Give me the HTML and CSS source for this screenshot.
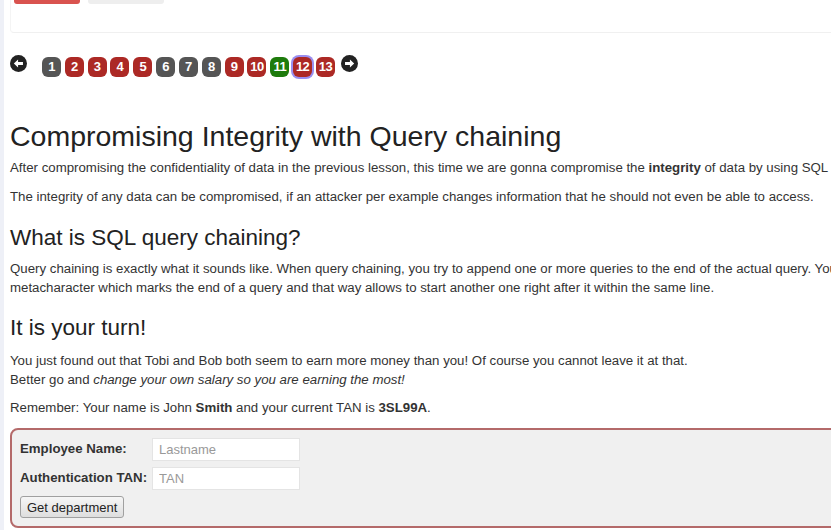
FILE: index.html
```html
<!DOCTYPE html>
<html>
<head>
<meta charset="utf-8">
<link rel="stylesheet" href="styles.css">
</head>
<body>
<div class="page">
  <div class="side"></div>
  <div class="main">
    <div class="toppanel">
      <div class="topbtns">
        <span class="tbtn red"></span>
        <span class="tbtn gray"></span>
      </div>
    </div>
    <div class="pager">
      <svg class="arrow left" width="17" height="17" viewBox="0 0 16 16"><circle cx="8" cy="8" r="8" fill="#222"/><path d="M3.6 8 L7.6 4.2 V6.6 H12.2 V9.4 H7.6 V11.8 Z" fill="#fff"/></svg>
      <div class="pages">
        <span class="pg g">1</span>
        <span class="pg r">2</span>
        <span class="pg r">3</span>
        <span class="pg r">4</span>
        <span class="pg r">5</span>
        <span class="pg g">6</span>
        <span class="pg g">7</span>
        <span class="pg g">8</span>
        <span class="pg r">9</span>
        <span class="pg r">10</span>
        <span class="pg gr">11</span>
        <span class="pg r cur">12</span>
        <span class="pg r">13</span>
        <svg class="arrow right" width="17" height="17" viewBox="0 0 16 16"><circle cx="8" cy="8" r="8" fill="#222"/><path d="M12.4 8 L8.4 4.2 V6.6 H3.8 V9.4 H8.4 V11.8 Z" fill="#fff"/></svg>
      </div>
    </div>
    <div class="content">
      <h1>Compromising Integrity with Query chaining</h1>
      <p>After compromising the confidentiality of data in the previous lesson, this time we are gonna compromise the <b>integrity</b> of data by using SQL query chaining.</p>
      <p>The integrity of any data can be compromised, if an attacker per example changes information that he should not even be able to access.</p>
      <h2>What is SQL query chaining?</h2>
      <p>Query chaining is exactly what it sounds like. When query chaining, you try to append one or more queries to the end of the actual query. You can do this by using the ;<br>metacharacter which marks the end of a query and that way allows to start another one right after it within the same line.</p>
      <h2 class="second">It is your turn!</h2>
      <p>You just found out that Tobi and Bob both seem to earn more money than you! Of course you cannot leave it at that.<br>Better go and <i>change your own salary so you are earning the most!</i></p>
      <p>Remember: Your name is John <b>Smith</b> and your current TAN is <b>3SL99A</b>.</p>
      <div class="attack">
        <div class="row"><span class="lbl">Employee Name:</span><input class="inp" placeholder="Lastname"></div>
        <div class="row"><span class="lbl">Authentication TAN:</span><input class="inp" placeholder="TAN"></div>
        <div class="row"><button class="sub">Get department</button></div>
      </div>
    </div>
  </div>
</div>
</body>
</html>
```
FILE: styles.css
```css
html, body {
  margin: 0;
  padding: 0;
  background: #fff;
  overflow: hidden;
}
body {
  font-family: "Liberation Sans", Arial, sans-serif;
  font-size: 13.25px;
  line-height: 18.57px;
  color: #333;
  width: 831px;
  height: 530px;
}
.page {
  display: flex;
  height: 530px;
}
.side {
  width: 4px;
  flex: none;
  background: #eef0f7;
}
.main {
  flex: 1;
  min-width: 0;
  padding-left: 6px;
}
.toppanel {
  height: 33px;
  border-bottom: 1px solid #f0f0f0;
  border-left: 1px solid #f4f4f4;
  border-radius: 0 0 0 4px;
  box-sizing: border-box;
}
.topbtns {
  display: flex;
  gap: 8px;
  padding-left: 3px;
}
.tbtn {
  display: block;
  height: 4px;
  border-radius: 0 0 3px 3px;
}
.tbtn.red { width: 66px; background: #d9534f; }
.tbtn.gray { width: 76px; background: #eeeeee; }
.pager {
  display: flex;
  align-items: flex-start;
  margin-top: 23px;
  height: 20px;
}
.arrow { display: block; flex: none; }
.arrow.left { margin-right: 15px; margin-top: -1px; }
.pages {
  display: flex;
  align-items: flex-start;
  gap: 3.83px;
  padding-top: 1px;
}
.arrow.right { margin-left: 2px; margin-top: -2px; }
.pg {
  display: flex;
  align-items: center;
  justify-content: center;
  width: 19px;
  height: 20px;
  box-sizing: border-box;
  border-radius: 6px;
  color: #fff;
  font-weight: bold;
  font-size: 13px;
  letter-spacing: -0.5px;
  white-space: nowrap;
}
.pg.g { background: #555; }
.pg.r { background: #ac2925; }
.pg.gr { background: #1e7b0c; }
.pg.cur { box-shadow: 0 0 0 2px #9a8ef0; }
h1 {
  font-size: 28.5px;
  font-weight: normal;
  line-height: 1.1;
  margin: 45px 0 7px;
  white-space: nowrap;
  color: #222;
}
h2 {
  font-size: 22.5px;
  font-weight: normal;
  line-height: 1.1;
  margin: 20px 0 9px;
  white-space: nowrap;
  color: #222;
}
h2.second { margin: 19px 0 11px; }
p {
  margin: 0 0 10px;
  white-space: nowrap;
}
.attack {
  margin-top: 8px;
  width: 900px;
  border: 2px solid #b46a6a;
  border-radius: 8px;
  background: #f0f0f0;
  padding: 7px 8px 6px 8px;
  box-sizing: border-box;
  height: 100px;
}
.row {
  display: flex;
  align-items: center;
  height: 25px;
  margin-bottom: 4px;
}
.lbl {
  font-weight: bold;
  width: 132px;
  flex: none;
}
.inp {
  width: 148px;
  height: 23px;
  box-sizing: border-box;
  border: 1px solid #e4e4e4;
  background: #fff;
  font-family: "Liberation Sans", Arial, sans-serif;
  font-size: 13px;
  padding: 2px 6px;
  outline: none;
}
.inp::placeholder { color: #999; }
.sub {
  font-family: "Liberation Sans", Arial, sans-serif;
  font-size: 13px;
  color: #222;
  height: 22px;
  padding: 0 6px;
  border: 1px solid #a0a0a0;
  border-radius: 3px;
  background: linear-gradient(#f6f6f6, #dedede);
}
```
